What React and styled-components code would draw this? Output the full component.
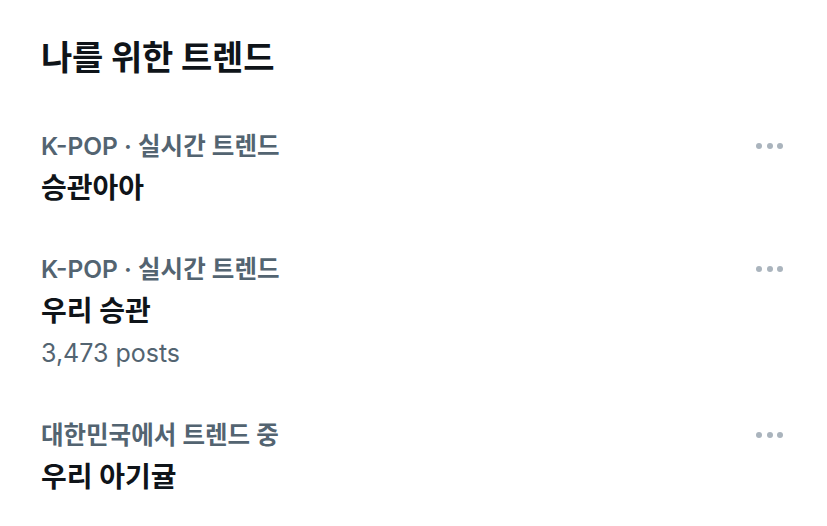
import React from "react";
import styled, { createGlobalStyle } from "styled-components";

const GlobalStyle = createGlobalStyle`
  html, body {
    margin: 0;
    padding: 0;
    background: #ffffff;
  }
  body {
    font-family: Inter, "Noto Sans CJK KR", "Noto Sans", sans-serif;
    color: #0f1419;
    -webkit-font-smoothing: antialiased;
  }
`;

const Panel = styled.section`
  width: 827px;
  height: 526px;
  box-sizing: border-box;
  padding: 36px 44px 0 41px;
  overflow: hidden;
`;

const Heading = styled.h2`
  margin: 0 0 25px;
  font-size: 34px;
  line-height: 44px;
  font-weight: 700;
  letter-spacing: -0.2px;
  color: #0f1419;
`;

const TrendList = styled.ul`
  list-style: none;
  margin: 0;
  padding: 0;
  display: flex;
  flex-direction: column;
`;

const TrendRow = styled.li`
  display: flex;
  justify-content: space-between;
  align-items: flex-start;
  padding: 20px 0 19px;
`;

const TrendBody = styled.div`
  display: flex;
  flex-direction: column;
`;

const Category = styled.div`
  font-size: 24.5px;
  line-height: 42px;
  font-weight: 600;
  color: #536471;
`;

const Title = styled.div`
  font-size: 28px;
  line-height: 42px;
  font-weight: 700;
  color: #0f1419;
`;

const PostCount = styled.div`
  font-size: 25px;
  line-height: 43px;
  font-weight: 400;
  color: #536471;
`;

const MoreButton = styled.button`
  border: 0;
  background: none;
  padding: 0;
  margin: 0;
  height: 42px;
  display: flex;
  align-items: center;
  gap: 4.5px;
  cursor: pointer;
`;

const Dot = styled.span`
  width: 6px;
  height: 6px;
  border-radius: 50%;
  background: #aab4bd;
`;

const trends = [
  { category: "K-POP · 실시간 트렌드", title: "승관아아" },
  { category: "K-POP · 실시간 트렌드", title: "우리 승관", posts: "3,473 posts" },
  { category: "대한민국에서 트렌드 중", title: "우리 아기귤" },
];

export default function App() {
  return (
    <>
      <GlobalStyle />
      <Panel>
        <Heading>나를 위한 트렌드</Heading>
        <TrendList>
          {trends.map((t, i) => (
            <TrendRow key={i}>
              <TrendBody>
                <Category>{t.category}</Category>
                <Title>{t.title}</Title>
                {t.posts && <PostCount>{t.posts}</PostCount>}
              </TrendBody>
              <MoreButton aria-label="더 보기">
                <Dot />
                <Dot />
                <Dot />
              </MoreButton>
            </TrendRow>
          ))}
        </TrendList>
      </Panel>
    </>
  );
}
